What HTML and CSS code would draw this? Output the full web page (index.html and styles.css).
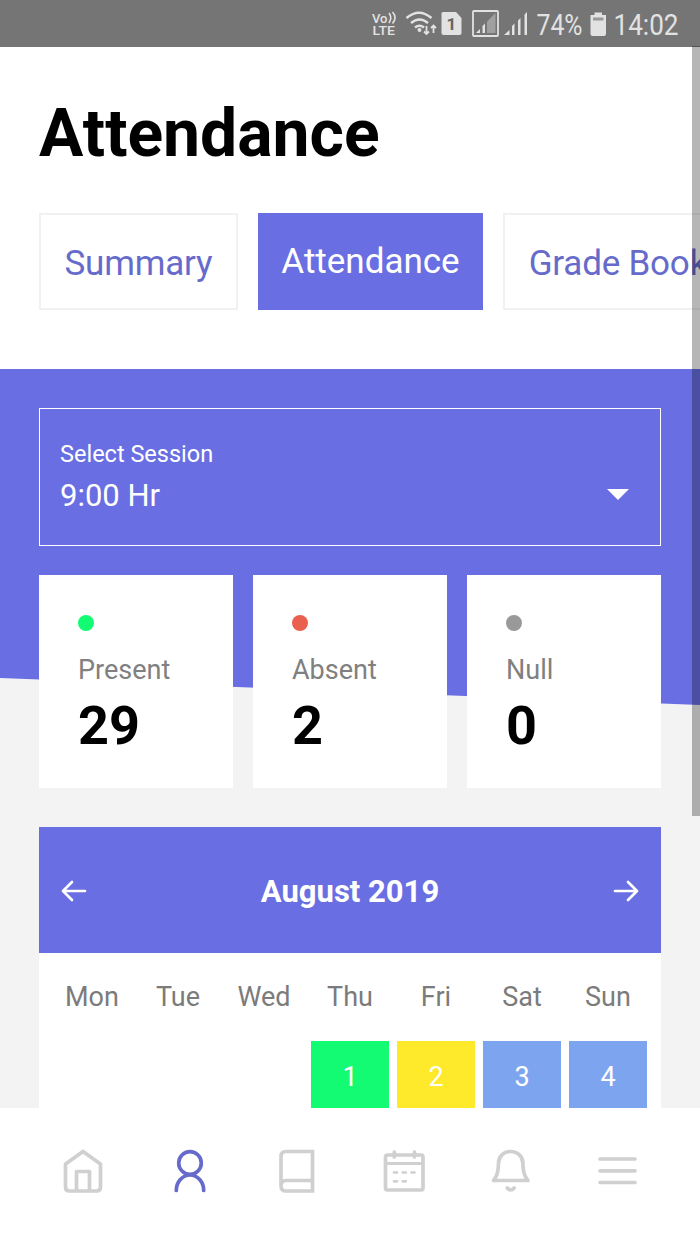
FILE: index.html
```
<!DOCTYPE html>
<html lang="en">
  <head>
    <meta charset="UTF-8" />
    <meta name="viewport" content="width=device-width, initial-scale=1.0" />
    <title>Attendance</title>
    <link rel="stylesheet" href="styles.css">
  </head>
  <body>
    <div class="status-bar">
      <svg width="34" height="46" viewBox="370 0 34 46">
        <text x="372" y="22.800" font-size="13" font-weight="500" textLength="15.500" lengthAdjust="spacingAndGlyphs">Vo</text>
        <path class="line" stroke-width="1.600" d="M389 13q3.500 4.500 0 10M392.500 12q5 5.500 0 11.500" />
        <text x="372.500" y="35.400" font-size="13.500" font-weight="500" textLength="22.500" lengthAdjust="spacingAndGlyphs">LTE</text>
      </svg>
      <svg width="36" height="46" viewBox="404 0 36 46">
        <path class="line" stroke-width="2.500" d="M406.500 18q12.500-10.500 25 0M411 23q8.500-7 17 0M415 27.500q4.500-3.500 9 0" />
        <circle cx="419.500" cy="30" r="2" />
        <path class="line" stroke-width="1.800" d="M426.500 26v8M424 31.500l2.500 2.500 2.500-2.500M433.500 33v-8M431 28l2.500-2.500 2.500 2.500" />
      </svg>
      <svg width="30" height="46" viewBox="440 0 30 46">
        <path d="M443 12h13l5.500 6v15q0 2-2 2h-16q-2 0-2-2v-19.500q0-1.500 1.500-1.500z" />
        <text class="sim" x="446.500" y="29.500" font-size="17" font-weight="700">1</text>
      </svg>
      <svg width="64" height="46" viewBox="470 0 64 46">
        <rect class="line" x="473" y="11" width="25" height="25" rx="1" stroke-width="1.800" />
        <path opacity=".4" d="M487 33V21.500L495.500 13v20z" />
        <path d="M476 33l4-4v4zM482.500 33v-7l2.500-2.500V33z" />
        <path d="M504 35l5.500-5v5zM512 35v-9l2.500-2.500V35zM518 35V20.500l2.500-2.500v17zM524.500 35V14.500L527 12v23z" />
      </svg>
      <svg width="52" height="46" viewBox="534 0 52 46">
        <text x="536.500" y="35" font-size="29.500" textLength="46" lengthAdjust="spacingAndGlyphs">74%</text>
      </svg>
      <svg width="24" height="46" viewBox="586 0 24 46">
        <path d="M594.500 12.500h7.500v2.500h4v19q0 2-2 2h-11.500q-2 0-2-2V15h4z" />
        <path class="charge" d="M593 17.500h10.500v3H593z" />
      </svg>
      <svg width="90" height="46" viewBox="610 0 90 46">
        <text x="613.500" y="35" font-size="29.500" textLength="65" lengthAdjust="spacingAndGlyphs">14:02</text>
      </svg>
    </div>

    <header>
      <h1>Attendance</h1>
      <nav class="tabs">
        <a class="tab">Summary</a>
        <a class="tab active">Attendance</a>
        <a class="tab">Grade Book</a>
      </nav>
    </header>

    <main>
      <div class="session">
        <div>
          <div class="session-label">Select Session</div>
          <div class="session-value">9:00 Hr</div>
        </div>
        <span class="caret"></span>
      </div>

      <div class="cards">
        <div class="card">
          <span class="dot present"></span>
          <div class="card-label">Present</div>
          <div class="card-value">29</div>
        </div>
        <div class="card">
          <span class="dot absent"></span>
          <div class="card-label">Absent</div>
          <div class="card-value">2</div>
        </div>
        <div class="card">
          <span class="dot null"></span>
          <div class="card-label">Null</div>
          <div class="card-value">0</div>
        </div>
      </div>

      <section class="calendar">
        <div class="calendar-header">
          <svg width="26" height="24" viewBox="0 0 26 24">
            <path d="M24 12H2M11 3L2 12l9 9" />
          </svg>
          <h2>August 2019</h2>
          <svg width="26" height="24" viewBox="0 0 26 24">
            <path d="M2 12h22M15 3l9 9-9 9" />
          </svg>
        </div>
        <div class="weekdays">
          <span>Mon</span>
          <span>Tue</span>
          <span>Wed</span>
          <span>Thu</span>
          <span>Fri</span>
          <span>Sat</span>
          <span>Sun</span>
        </div>
        <div class="days">
          <span class="day first green">1</span>
          <span class="day yellow">2</span>
          <span class="day blue">3</span>
          <span class="day blue">4</span>
        </div>
      </section>
    </main>

    <footer>
      <svg width="48" height="48" viewBox="0 0 48 48">
        <path d="M24 4.500L6.500 17v23q0 4 4 4h27q4 0 4-4V17zM17.500 44V24.500h13V44" />
      </svg>
      <svg class="selected" width="48" height="48" viewBox="0 0 48 48">
        <circle cx="24" cy="16" r="11.300" />
        <path d="M10.300 43.500a13.700 15.500 0 0 1 27.400 0" />
      </svg>
      <svg width="48" height="48" viewBox="0 0 48 48">
        <path class="square" d="M8 39V9.500q0-5 5-5h26.500v39.500H13q-5 0-5-5 0-5.500 5-5.500h26.500" />
      </svg>
      <svg width="48" height="48" viewBox="0 0 48 48">
        <rect x="5.500" y="8" width="37.500" height="35" rx="2" />
        <path d="M5.500 16.500h37.500" stroke-width="3" />
        <path d="M14.300 5v5M34.500 5v5" />
        <path stroke-width="2.700" d="M14 25.500h3M22.800 25.500h3M31.500 25.500h3M14 34.300h3M22.800 34.300h3" />
      </svg>
      <svg width="48" height="48" viewBox="0 0 48 48">
        <path d="M6.500 33.500C10.500 29 11.500 24 11.500 16.500c0-7 5-12 12.200-12s12.200 5 12.200 12c0 7.500 1 12.500 5 17z" />
        <path d="M20.300 41q3.400 4 6.800 0" />
      </svg>
      <svg width="48" height="48" viewBox="0 0 48 48">
        <path d="M6 12h35M6 23.800h35M6 35.500h35" />
      </svg>
    </footer>

    <div class="scrollbar"></div>
  </body>
</html>
```
FILE: styles.css
```
* {
  box-sizing: border-box;
}
body {
  display: flex;
  flex-direction: column;
  position: relative;
  width: 700px;
  height: 1244px;
  margin: 0;
  overflow: hidden;
  font-family: Roboto, sans-serif;
  background-color: #fff;
}
svg {
  display: block;
  flex: none;
}
h1,
h2 {
  margin: 0;
}
.status-bar {
  display: flex;
  justify-content: flex-end;
  flex: none;
  height: 46.5px;
  background-color: #757575;
}
.status-bar svg {
  fill: #e2e2e2;
}
.status-bar .line {
  fill: none;
  stroke: #e2e2e2;
}
.status-bar .sim {
  fill: #666;
}
.status-bar .charge {
  fill: #999;
}
header {
  flex: none;
  height: 322.5px;
  padding: 47.5px 0 0 39px;
  overflow: hidden;
}
h1 {
  font-size: 66px;
  line-height: 80px;
  font-weight: 700;
  color: #000;
}
.tabs {
  display: flex;
  gap: 20px;
  margin-top: 38.5px;
}
.tab {
  flex: none;
  height: 97px;
  padding: 0 23.5px;
  border: 2px solid #f1f1f1;
  font-size: 35px;
  line-height: 98px;
  letter-spacing: -0.2px;
  color: #666bcb;
}
.tab.active {
  padding: 0 23.5px;
  border: none;
  line-height: 97px;
  letter-spacing: 0;
  color: #fff;
  background-color: #696fe2;
}
main {
  position: relative;
  flex: none;
  height: 739px;
  padding: 39px 39px 0;
  overflow: hidden;
  background-color: #f3f3f3;
}
/* slanted backdrop behind the session box and the cards */
main::before {
  content: "";
  position: absolute;
  top: 0;
  left: 0;
  width: 100%;
  height: 336px;
  background-color: #696fe2;
  clip-path: polygon(0 0, 100% 0, 100% 100%, 0 309px);
}
.session,
.cards,
.calendar {
  position: relative;
}
.session {
  display: flex;
  justify-content: space-between;
  align-items: center;
  height: 138px;
  padding: 3px 31px 0 20px;
  border: 1.500px solid #fff;
  color: #fff;
}
.session-label {
  font-size: 23.500px;
  line-height: 34px;
}
.session-value {
  font-size: 31px;
  line-height: 50px;
}
.caret {
  margin-top: 31px;
  border: 11px solid transparent;
  border-top-color: #fff;
  border-bottom: none;
}
.cards {
  display: grid;
  grid-template-columns: repeat(3, 1fr);
  gap: 20px;
  margin-top: 28.5px;
}
.card {
  height: 213.5px;
  padding: 40px 0 0 39px;
  background-color: #fff;
}
.dot {
  display: block;
  width: 16px;
  height: 16px;
  margin-left: -0.5px;
  border-radius: 50%;
}
.present {
  background-color: #13fb73;
}
.absent {
  background-color: #e9604f;
}
.null {
  background-color: #999;
}
.card-label {
  margin-top: 19px;
  font-size: 27px;
  line-height: 40px;
  color: #808080;
}
.card-value {
  font-size: 54px;
  line-height: 72px;
  font-weight: 700;
  color: #000;
}
.calendar {
  height: 290px;
  margin-top: 39px;
  background-color: #fff;
}
.calendar-header {
  display: flex;
  justify-content: space-between;
  align-items: center;
  height: 126px;
  padding: 2px 22px 0;
  background-color: #696fe2;
}
.calendar-header svg {
  fill: none;
  stroke: #fff;
  stroke-width: 2.700;
  stroke-linecap: round;
  stroke-linejoin: round;
}
h2 {
  font-size: 31px;
  font-weight: 700;
  color: #fff;
}
.weekdays,
.days {
  display: grid;
  grid-template-columns: repeat(7, 78px);
  gap: 8px;
  padding-left: 14px;
  font-size: 27px;
  text-align: center;
}
.weekdays {
  line-height: 88px;
  color: #7b7b7b;
}
.day {
  height: 78px;
  line-height: 72px;
  color: #fff;
}
.first {
  grid-column: 4;
}
.green {
  background-color: #13fb73;
}
.yellow {
  background-color: #fee92b;
}
.blue {
  background-color: #7da5ef;
}
footer {
  display: grid;
  grid-template-columns: repeat(6, 107px);
  justify-content: center;
  justify-items: center;
  flex: 1;
  padding-top: 39px;
  background-color: #fff;
}
footer svg {
  fill: none;
  stroke: #d0d0d0;
  stroke-width: 3.700;
  stroke-linecap: round;
  stroke-linejoin: round;
}
footer .square {
  stroke-linejoin: miter;
}
footer .selected {
  stroke: #666bcb;
}
.scrollbar {
  position: absolute;
  top: 46px;
  right: 0;
  width: 8px;
  height: 770px;
  background-color: rgba(0, 0, 0, 0.285);
}
```
